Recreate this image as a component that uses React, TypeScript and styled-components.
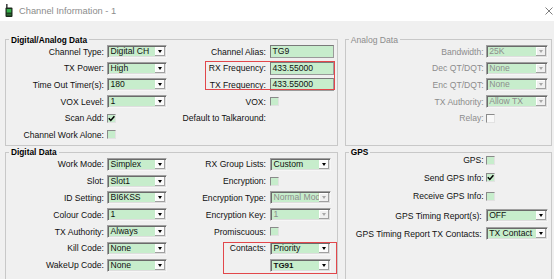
import styled, { createGlobalStyle } from "styled-components";

const GlobalStyle = createGlobalStyle`
  html, body { margin: 0; padding: 0; background: #ffffff; }
  * { box-sizing: border-box; }
`;

const Window = styled.div`
  width: 554px;
  height: 279px;
  overflow: hidden;
  font-family: "Liberation Sans", Arial, sans-serif;
  font-size: 8.6px;
  color: #111;
  background: #f0f0f0;
`;

const TitleBar = styled.div`
  height: 21px;
  display: flex;
  align-items: center;
  padding: 0 1.5px 0 5px;
  background: #ffffff;
`;

const Caption = styled.span`
  margin-left: 6px;
  font-size: 9.3px;
  color: #8c8c8c;
`;

const CloseBox = styled.div`
  margin-left: auto;
  width: 8px;
  height: 8px;
  display: flex;
`;

const Body = styled.div`
  display: grid;
  grid-template-columns: 332.5px 207.5px;
  grid-template-rows: 111px 140px;
  column-gap: 7.2px;
  row-gap: 1.5px;
  padding: 13.5px 0 0 5px;
`;

const Group = styled.fieldset`
  margin: 0;
  padding: 0;
  min-width: 0;
  border: 1px solid #c8c8c8;
`;

const Legend = styled.legend<{ $muted?: boolean }>`
  margin-left: 3px;
  padding: 0 2px;
  line-height: 10px;
  font-size: ${p => (p.$muted ? "8.6px" : "8.3px")};
  font-weight: ${p => (p.$muted ? 400 : 700)};
  color: ${p => (p.$muted ? "#8c8c8c" : "#000")};
`;

const FormGrid = styled.div<{ $cols: string; $rows: string; $offset: number }>`
  position: relative;
  display: grid;
  grid-template-columns: ${p => p.$cols};
  grid-template-rows: ${p => p.$rows};
  align-items: center;
  justify-items: start;
  margin-top: ${p => p.$offset}px;
`;

const Label = styled.span<{ $muted?: boolean; $pad?: number }>`
  justify-self: stretch;
  text-align: right;
  padding-right: ${p => p.$pad ?? 3}px;
  white-space: nowrap;
  line-height: 10px;
  color: ${p => (p.$muted ? "#8c8c8c" : "#111")};
`;

const ComboBox = styled.div<{ $w: number; $disabled?: boolean }>`
  width: ${p => p.$w}px;
  height: 13px;
  display: flex;
  padding: 1px;
  background: #c7edcc;
  border: 1px solid;
  border-color: #a0a0a0 #f6f6f6 #f6f6f6 #a0a0a0;
  box-shadow: inset 1px 1px 0 #6a6a6a, inset -1px -1px 0 #dedede;
  color: ${p => (p.$disabled ? "#8d8d8d" : "#111")};
`;

const ComboValue = styled.span<{ $bold?: boolean }>`
  flex: 1;
  padding-left: 1.5px;
  line-height: 9px;
  overflow: hidden;
  white-space: nowrap;
  font-weight: ${p => (p.$bold ? 700 : 400)};
  font-size: ${p => (p.$bold ? "8px" : "8.6px")};
`;

const DropButton = styled.span<{ $disabled?: boolean }>`
  width: 10px;
  display: flex;
  align-items: center;
  justify-content: center;
  background: ${p => (p.$disabled ? "#f0f0f0" : "#fbfbfb")};
  box-shadow: inset -1px -1px 0 #a0a0a0, inset 1px 1px 0 #ffffff;

  &::after {
    content: "";
    border-left: 2.5px solid transparent;
    border-right: 2.5px solid transparent;
    border-top: 3px solid ${p => (p.$disabled ? "#a8a8a8" : "#000")};
  }
`;

const TextBox = styled.div<{ $w: number }>`
  width: ${p => p.$w}px;
  height: 13px;
  padding: 0 1.5px;
  line-height: 11px;
  background: #c7edcc;
  border: 1px solid;
  border-color: #7a7a7a #9a9a9a #9a9a9a #7a7a7a;
  color: #111;
`;

const CheckBox = styled.span<{ $disabled?: boolean }>`
  width: 9px;
  height: 9px;
  display: flex;
  align-items: center;
  justify-content: center;
  background: ${p => (p.$disabled ? "#f8f8f8" : "#c7edcc")};
  border: 1px solid;
  border-color: #8a8a8a #e2e2e2 #e2e2e2 #8a8a8a;
`;

const Highlight = styled.span<{ $col: string; $row: string; $inset: string }>`
  position: absolute;
  grid-column: ${p => p.$col};
  grid-row: ${p => p.$row};
  inset: ${p => p.$inset};
  border: 1px solid #e2474b;
  pointer-events: none;
`;

type ComboProps = { value: string; width: number; disabled?: boolean; bold?: boolean };

function Combo({ value, width, disabled, bold }: ComboProps) {
  return (
    <ComboBox $w={width} $disabled={disabled}>
      <ComboValue $bold={bold}>{value}</ComboValue>
      <DropButton $disabled={disabled} />
    </ComboBox>
  );
}

function Check({ checked, disabled }: { checked?: boolean; disabled?: boolean }) {
  return (
    <CheckBox $disabled={disabled}>
      {checked && (
        <svg width="7" height="7" viewBox="0 0 7 7">
          <path d="M0.8 3.3 L2.8 5.4 L6.4 1.2" fill="none" stroke="#000" strokeWidth="1.5" />
        </svg>
      )}
    </CheckBox>
  );
}

function RadioIcon() {
  return (
    <svg width="8" height="13" viewBox="0 0 8 13">
      <rect x="1.2" y="0" width="1.3" height="4" fill="#1f1f1f" />
      <rect x="0.5" y="3.5" width="7" height="9.5" rx="1" fill="#1c2a1c" />
      <rect x="1.7" y="5" width="4.6" height="3.6" fill="#35b04a" />
      <rect x="1.7" y="9.6" width="4.6" height="2" fill="#2a6a30" />
    </svg>
  );
}

export default function App() {
  return (
    <Window>
      <GlobalStyle />
      <TitleBar>
        <RadioIcon />
        <Caption>Channel Information - 1</Caption>
        <CloseBox>
          <svg width="8" height="8" viewBox="0 0 8 8">
            <path d="M0.5 0.5 L7.5 7.5 M7.5 0.5 L0.5 7.5" stroke="#6f6f6f" strokeWidth="0.9" />
          </svg>
        </CloseBox>
      </TitleBar>

      <Body>
        <Group>
          <Legend>Digital/Analog Data</Legend>
          <FormGrid $cols="101px 60px 103px 64px" $rows="repeat(6, 16.6px)" $offset={-1}>
            <Label>Channel Type:</Label>
            <Combo value="Digital CH" width={60} />
            <Label $pad={4}>Channel Alias:</Label>
            <TextBox $w={64}>TG9</TextBox>

            <Label>TX Power:</Label>
            <Combo value="High" width={60} />
            <Label $pad={4}>RX Frequency:</Label>
            <TextBox $w={64}>433.55000</TextBox>

            <Label>Time Out Timer(s):</Label>
            <Combo value="180" width={60} />
            <Label $pad={4}>TX Frequency:</Label>
            <TextBox $w={64}>433.55000</TextBox>

            <Label>VOX Level:</Label>
            <Combo value="1" width={60} />
            <Label $pad={4}>VOX:</Label>
            <Check />

            <Label>Scan Add:</Label>
            <Check checked />
            <Label $pad={4}>Default to Talkaround:</Label>
            <span />

            <Label>Channel Work Alone:</Label>
            <Check />

            <Highlight $col="3 / 5" $row="2 / 4" $inset="1px -1px 3px 38px" />
          </FormGrid>
        </Group>

        <Group>
          <Legend $muted>Analog Data</Legend>
          <FormGrid $cols="140px 62px" $rows="repeat(5, 16.6px)" $offset={-1}>
            <Label $muted $pad={2}>Bandwidth:</Label>
            <Combo value="25K" width={62} disabled />
            <Label $muted $pad={2}>Dec QT/DQT:</Label>
            <Combo value="None" width={62} disabled />
            <Label $muted $pad={2}>Enc QT/DQT:</Label>
            <Combo value="None" width={62} disabled />
            <Label $muted $pad={2}>TX Authority:</Label>
            <Combo value="Allow TX" width={62} disabled />
            <Label $muted $pad={2}>Relay:</Label>
            <Check disabled />
          </FormGrid>
        </Group>

        <Group>
          <Legend>Digital Data</Legend>
          <FormGrid $cols="101px 60px 103px 66px" $rows="repeat(7, 16.8px)" $offset={-1}>
            <Label>Work Mode:</Label>
            <Combo value="Simplex" width={60} />
            <Label $pad={4}>RX Group Lists:</Label>
            <Combo value="Custom" width={61} />

            <Label>Slot:</Label>
            <Combo value="Slot1" width={60} />
            <Label $pad={4}>Encryption:</Label>
            <Check />

            <Label>ID Setting:</Label>
            <Combo value="BI6KSS" width={60} />
            <Label $pad={4}>Encryption Type:</Label>
            <Combo value="Normal Mode" width={61} disabled />

            <Label>Colour Code:</Label>
            <Combo value="1" width={60} />
            <Label $pad={4}>Encryption Key:</Label>
            <Combo value="1" width={61} disabled />

            <Label>TX Authority:</Label>
            <Combo value="Always" width={60} />
            <Label $pad={4}>Promiscuous:</Label>
            <Check />

            <Label>Kill Code:</Label>
            <Combo value="None" width={60} />
            <Label $pad={4}>Contacts:</Label>
            <Combo value="Priority" width={61} />

            <Label>WakeUp Code:</Label>
            <Combo value="None" width={60} />
            <span />
            <Combo value="TG91" width={61} bold />

            <Highlight $col="3 / 5" $row="6 / 8" $inset="2.4px -0.7px -0.8px 56px" />
          </FormGrid>
        </Group>

        <Group>
          <Legend>GPS</Legend>
          <FormGrid $cols="140px 62px" $rows="16px 19px 18px 21px 15px" $offset={-5}>
            <Label $pad={2}>GPS:</Label>
            <Check />
            <Label $pad={2}>Send GPS Info:</Label>
            <Check checked />
            <Label $pad={2}>Receive GPS Info:</Label>
            <Check />
            <Label $pad={4}>GPS Timing Report(s):</Label>
            <Combo value="OFF" width={62} />
            <Label $pad={4}>GPS Timing Report TX Contacts:</Label>
            <Combo value="TX Contact" width={62} />
          </FormGrid>
        </Group>
      </Body>
    </Window>
  );
}
